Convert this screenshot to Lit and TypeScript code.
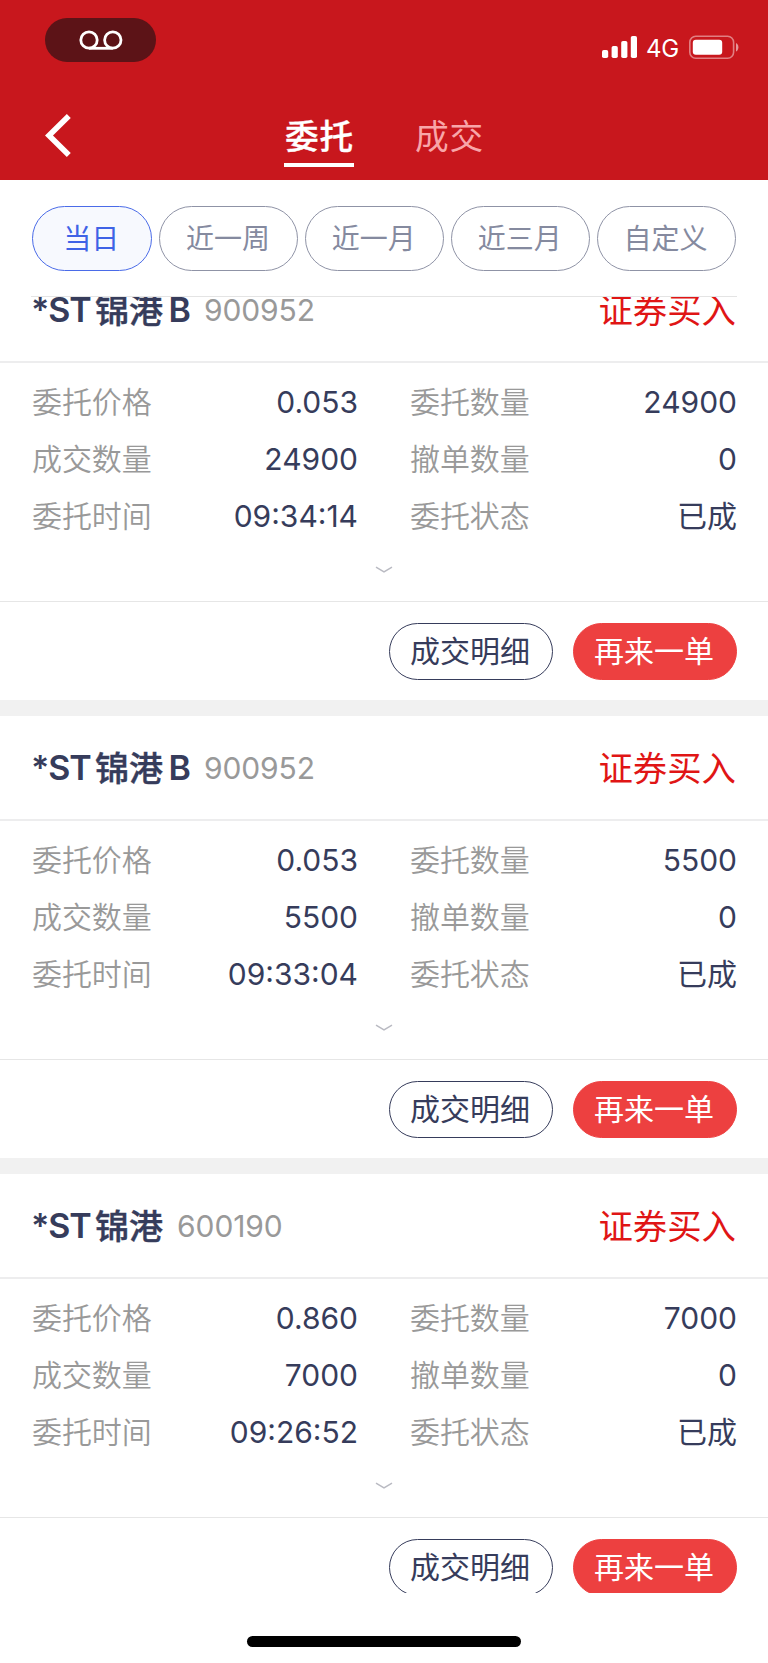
import { LitElement, html, css, svg } from "lit";
import { customElement, property, state } from "lit/decorators.js";
import { classMap } from "lit/directives/class-map.js";

interface Order {
  name: [string, string, string];
  code: string;
  price: string;
  amount: string;
  time: string;
}

const orders: Order[] = [
  { name: ["*ST", "锦港", "B"], code: "900952", price: "0.053", amount: "24900", time: "09:34:14" },
  { name: ["*ST", "锦港", "B"], code: "900952", price: "0.053", amount: "5500", time: "09:33:04" },
  { name: ["*ST", "锦港", ""], code: "600190", price: "0.860", amount: "7000", time: "09:26:52" },
];

const ranges = ["当日", "近一周", "近一月", "近三月", "自定义"];

@customElement("status-bar")
class StatusBar extends LitElement {
  static styles = css`
    :host {
      display: flex;
      justify-content: space-between;
      align-items: flex-start;
      height: 92px;
      padding: 18px 29px 0 44.5px;
      box-sizing: border-box;
    }
    .pill {
      display: flex;
      align-items: center;
      justify-content: center;
      width: 111.5px;
      height: 43.5px;
      border-radius: 22px;
      background: #5c1317;
    }
    .reels {
      margin-left: 1px;
    }
    .right {
      display: flex;
      align-items: center;
      height: 24px;
      margin-top: 17px;
      color: #fff;
    }
    .net {
      width: 32px;
      margin: 4px 11px 0 9px;
      font: 400 24px/24px Inter, sans-serif;
      letter-spacing: -0.2px;
      white-space: nowrap;
    }
    svg {
      display: block;
    }
  `;
  render() {
    return html`
      <div class="pill">
        <svg class="reels" width="44" height="20" viewBox="0 0 44 20" fill="none" stroke="#fff" stroke-width="2.8">
          <circle cx="10" cy="10" r="8.2" />
          <circle cx="33.8" cy="10" r="8.2" />
          <path d="M10 18.3H33.8" />
        </svg>
      </div>
      <div class="right">
        <svg width="35" height="24" viewBox="0 0 35 24" fill="#fff">
          ${[
            [0, 15, 8],
            [9.6, 11, 12],
            [19.2, 6, 17],
            [28.8, 1, 22],
          ].map(([x, y, h]) => svg`<rect x=${x} y=${y} width="6.2" height=${h} rx="1.8" />`)}
        </svg>
        <span class="net">4G</span>
        <svg width="50" height="24" viewBox="0 0 50 24">
          <rect x="0.8" y="1.2" width="43.8" height="22" rx="6" fill="none" stroke="#fff" stroke-opacity=".45" stroke-width="1.6" />
          <rect x="3.8" y="4.8" width="29.4" height="15" rx="3" fill="#fff" />
          <path d="M47 8c3.2 1.3 3.2 7 0 8.6z" fill="#fff" fill-opacity=".55" />
        </svg>
      </div>
    `;
  }
}

@customElement("info-row")
class InfoRow extends LitElement {
  @property() label = "";
  @property() value = "";
  static styles = css`
    :host {
      display: flex;
      justify-content: space-between;
      align-items: center;
      height: 57.2px;
      font: 400 30px/40px Inter, "Noto Sans CJK SC", sans-serif;
    }
    .label {
      color: #999;
      font-weight: 350;
      letter-spacing: -0.1px;
    }
    .value {
      color: #363c5b;
    }
  `;
  render() {
    return html`<span class="label">${this.label}</span><span class="value">${this.value}</span>`;
  }
}

@customElement("order-card")
class OrderCard extends LitElement {
  @property({ attribute: false }) order!: Order;
  static styles = css`
    :host {
      display: block;
      flex: none;
      height: 442px;
      background: #fff;
    }
    .head {
      display: flex;
      align-items: center;
      height: 105px;
      padding: 0 32px 0 31px;
      border-bottom: 2px solid #ededee;
      box-sizing: border-box;
      line-height: 50px;
    }
    .name {
      display: flex;
      gap: 5.5px;
      padding-top: 1px;
      color: #363c5b;
      font: 600 34px/50px Inter, "Noto Sans CJK SC", sans-serif;
    }
    .latin {
      letter-spacing: -1.1px;
    }
    .han {
      font-weight: 500;
      margin-left: -1px;
      padding-top: 1px;
      -webkit-text-stroke: 0.4px #363c5b;
    }
    .code {
      margin-left: 14px;
      color: #999;
      font: 400 30px/50px Inter, sans-serif;
      letter-spacing: -0.1px;
    }
    .side {
      margin-left: auto;
      padding-top: 2px;
      color: #e01515;
      font: 400 34.4px/50px Inter, "Noto Sans CJK SC", sans-serif;
    }
    .grid {
      display: grid;
      grid-template-columns: 326px 327px;
      column-gap: 52px;
      padding: 10px 31px 0 32px;
    }
    .more {
      display: flex;
      justify-content: center;
      padding-top: 21px;
      height: 35px;
    }
    .actions {
      display: flex;
      justify-content: flex-end;
      align-items: center;
      gap: 20px;
      height: 99px;
      padding: 0 31px;
      border-top: 1.5px solid #e6e6e6;
    }
    .btn {
      display: flex;
      align-items: center;
      justify-content: center;
      width: 164px;
      height: 57px;
      box-sizing: border-box;
      border: 1px solid #363c5b;
      border-radius: 29px;
      background: #fff;
      color: #363c5b;
      font: 400 30px/40px Inter, "Noto Sans CJK SC", sans-serif;
    }
    .text {
      margin-left: -2px;
    }
    .primary {
      border-color: #ed4040;
      background: #ed4040;
      color: #fff;
    }
  `;
  render() {
    const o = this.order;
    return html`
      <div class="head">
        <span class="name">
          ${o.name
            .filter(Boolean)
            .map((part, i) => html`<span class=${classMap({ latin: i !== 1, han: i === 1 })}>${part}</span>`)}
        </span>
        <span class="code">${o.code}</span>
        <span class="side">证券买入</span>
      </div>
      <div class="grid">
        <info-row label="委托价格" value=${o.price}></info-row>
        <info-row label="委托数量" value=${o.amount}></info-row>
        <info-row label="成交数量" value=${o.amount}></info-row>
        <info-row label="撤单数量" value="0"></info-row>
        <info-row label="委托时间" value=${o.time}></info-row>
        <info-row label="委托状态" value="已成"></info-row>
      </div>
      <div class="more">
        <svg width="18" height="8" viewBox="0 0 18 8" fill="none" stroke="#b9bac2" stroke-width="1.5">
          <path d="M1 1.2L9 6L17 1.2" />
        </svg>
      </div>
      <div class="actions">
        <span class="btn"><span class="text">成交明细</span></span>
        <span class="btn primary"><span class="text">再来一单</span></span>
      </div>
    `;
  }
}

@customElement("app-root")
class AppRoot extends LitElement {
  @state() private range = 0;
  static styles = css`
    :host {
      display: flex;
      flex-direction: column;
      width: 768px;
      height: 1663px;
      overflow: hidden;
      background: #fff;
    }
    .top {
      flex: none;
      height: 180px;
      background: #c8171d;
    }
    .nav {
      display: grid;
      grid-template-columns: 1fr auto 1fr;
      height: 88px;
      padding: 0 44px;
    }
    .back {
      display: block;
      margin-top: 21px;
    }
    .tabs {
      display: flex;
      gap: 60px;
      font: 400 33.7px/50px "Noto Sans CJK SC", sans-serif;
      letter-spacing: 0.7px;
    }
    .tab {
      width: 70px;
      height: 75px;
      padding: 18px 0 0 1px;
      box-sizing: border-box;
      color: #f8a6a9;
    }
    .tab.on {
      color: #fff;
      font-weight: 500;
      border-bottom: 4px solid #fff;
      -webkit-text-stroke: 0.3px #fff;
    }
    .filters {
      flex: none;
      display: flex;
      gap: 7px;
      height: 117px;
      margin: 0 31px;
      padding: 26px 1px 0;
      box-sizing: border-box;
      border-bottom: 1px solid #e4e4e4;
    }
    .chip {
      flex: 139 1 0;
      display: flex;
      align-items: center;
      justify-content: center;
      height: 65px;
      padding-right: 2px;
      box-sizing: border-box;
      border: 1px solid #8f93a6;
      border-radius: 33px;
      color: #858a9f;
      font: 400 28px/40px Inter, "Noto Sans CJK SC", sans-serif;
    }
    .chip.on {
      flex-grow: 120;
      border-color: #4a6be8;
      background: #f7f9fe;
      color: #3f63e6;
    }
    .list {
      flex: none;
      display: flex;
      flex-direction: column;
      gap: 16px;
      height: 1296px;
      overflow: hidden;
      background: #f1f1f1;
    }
    .list > :first-child {
      margin-top: -39px;
    }
    .home {
      flex: none;
      width: 274px;
      height: 11px;
      margin: 43px auto 0;
      border-radius: 6px;
      background: #000;
    }
  `;
  render() {
    return html`
      <div class="top">
        <status-bar></status-bar>
        <div class="nav">
          <svg class="back" width="30" height="46" viewBox="0 0 30 46" fill="none" stroke="#fff" stroke-width="5.6">
            <path d="M24.8 3L5 22.5L24.8 42" />
          </svg>
          <div class="tabs">
            <span class="tab on">委托</span>
            <span class="tab">成交</span>
          </div>
        </div>
      </div>
      <div class="filters">
        ${ranges.map(
          (r, i) =>
            html`<span class=${classMap({ chip: true, on: i === this.range })} @click=${() => (this.range = i)}>${r}</span>`
        )}
      </div>
      <div class="list">${orders.map((o) => html`<order-card .order=${o}></order-card>`)}</div>
      <div class="home"></div>
    `;
  }
}
